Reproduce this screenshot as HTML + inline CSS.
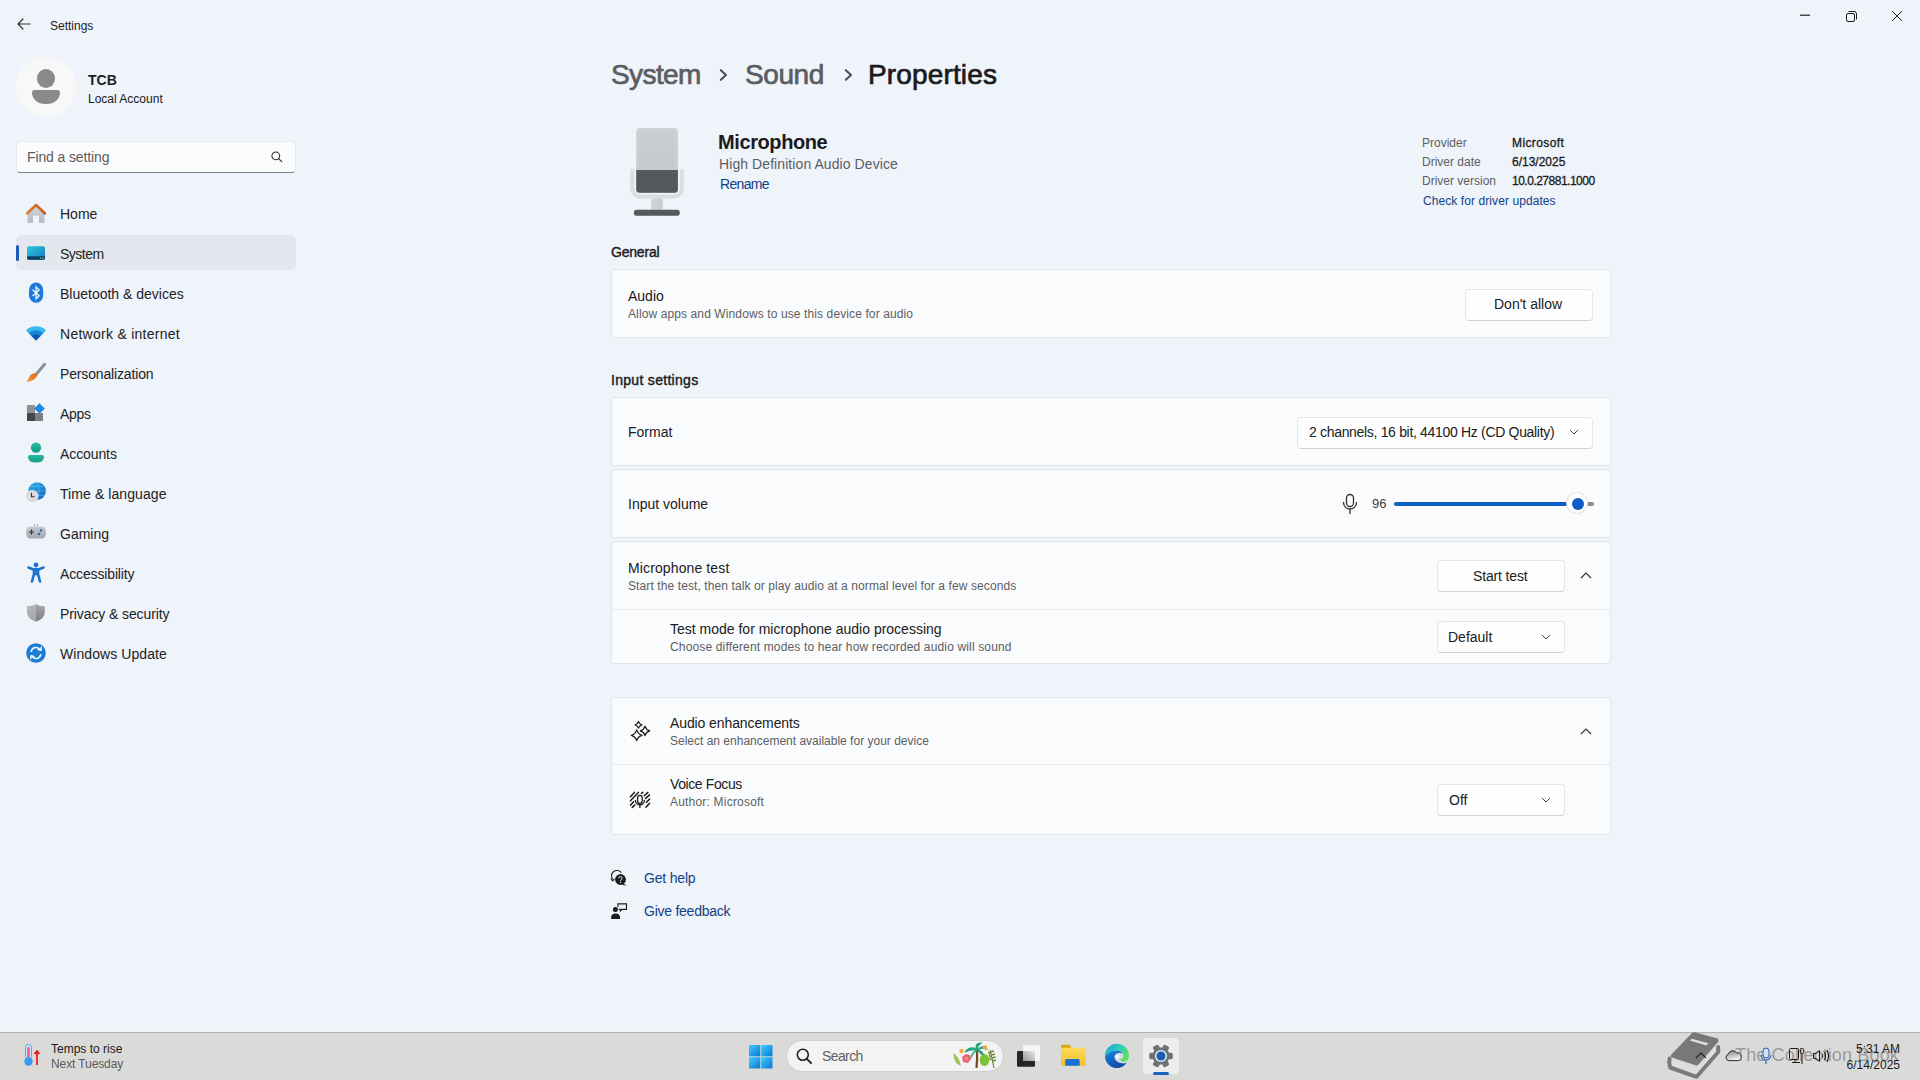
<!DOCTYPE html>
<html><head><meta charset="utf-8">
<style>
html,body{margin:0;padding:0;width:1920px;height:1080px;overflow:hidden;}
body{background:#eff3fa;font-family:"Liberation Sans",sans-serif;color:#202020;position:relative;}
.a{position:absolute;}
.t{position:absolute;white-space:nowrap;}
.f12{font-size:12px;line-height:12px;}
.f14{font-size:14px;line-height:14px;}
.f20{font-size:20px;line-height:20px;}
.f28{font-size:28px;line-height:28px;}
.sec{color:#5c5e62;}
.link{color:#0f4189;}
.card{position:absolute;left:611px;width:998px;background:#fafbfd;border:1px solid #e2e5ea;border-radius:3px;}
.btn{position:absolute;background:#fefefe;border:1px solid #e6e6e6;border-bottom-color:#d2d2d2;border-radius:4px;box-sizing:border-box;}
.sep{position:absolute;left:612px;width:998px;height:1px;background:#e6e8eb;}
.nav{position:absolute;left:60px;font-size:14px;line-height:14px;color:#222;white-space:nowrap;}
.ic{position:absolute;}
</style></head><body>

<!-- title bar -->
<svg class="ic" style="left:17px;top:18px" width="14" height="12" viewBox="0 0 14 12"><path d="M6 1 L1 6 L6 11 M1 6 H13" fill="none" stroke="#333" stroke-width="1.2" stroke-linecap="round" stroke-linejoin="round"/></svg>
<div class="t f12" style="left:50px;top:20px;color:#1f1f1f">Settings</div>

<svg class="ic" style="left:1795px;top:10px" width="20" height="12"><rect x="5" y="4.6" width="10" height="1.2" fill="#222"/></svg>
<svg class="ic" style="left:1840px;top:5px" width="22" height="22" viewBox="0 0 22 22"><rect x="6.5" y="8.5" width="8" height="8" rx="1.5" fill="none" stroke="#1b1b1b" stroke-width="1"/><path d="M8.5 6.5 H14 A2.5 2.5 0 0 1 16.5 9 V14.5" fill="none" stroke="#1b1b1b" stroke-width="1"/></svg>
<svg class="ic" style="left:1886px;top:5px" width="22" height="22" viewBox="0 0 22 22"><path d="M6 6 L16 16 M16 6 L6 16" stroke="#222" stroke-width="1" fill="none"/></svg>

<!-- profile -->
<div class="a" style="left:16px;top:57px;width:60px;height:60px;border-radius:50%;background:#f8f8f9"></div>
<div class="a" style="left:36.8px;top:69px;width:18px;height:18.5px;border-radius:50%;background:#8a8a8a"></div>
<div class="a" style="left:32px;top:90px;width:28px;height:13.8px;border-radius:3px 3px 14px 14px / 3px 3px 12px 12px;background:#8a8a8a"></div>
<div class="t f14" style="left:88px;top:73px;font-weight:bold">TCB</div>
<div class="t f12" style="left:88px;top:93px">Local Account</div>

<!-- search -->
<div class="a" style="left:16px;top:141px;width:278px;height:30px;background:#fbfcfd;border:1px solid #e6e8eb;border-bottom:1px solid #7d828a;border-radius:4px"></div>
<div class="t f14" style="left:27px;top:150px;color:#5d5d5d;letter-spacing:-0.12px">Find a setting</div>
<svg class="ic" style="left:270px;top:150px" width="14" height="14" viewBox="0 0 14 14"><circle cx="5.8" cy="5.8" r="3.9" fill="none" stroke="#333" stroke-width="1.05"/><path d="M8.6 8.6 L11.8 11.6" stroke="#333" stroke-width="1.2" stroke-linecap="round"/></svg>

<!-- NAV -->
<div class="a" style="left:16px;top:235px;width:280px;height:35px;background:#e4e8ee;border-radius:5px"></div>
<div class="a" style="left:16px;top:245px;width:3px;height:16px;background:#1a5bb5;border-radius:2px"></div>
<div class="nav" style="top:207px">Home</div>
<div class="nav" style="top:247px;letter-spacing:-0.5px">System</div>
<div class="nav" style="top:287px">Bluetooth &amp; devices</div>
<div class="nav" style="top:327px;letter-spacing:0.27px">Network &amp; internet</div>
<div class="nav" style="top:367px;letter-spacing:-0.15px">Personalization</div>
<div class="nav" style="top:407px;letter-spacing:-0.3px">Apps</div>
<div class="nav" style="top:447px;letter-spacing:-0.1px">Accounts</div>
<div class="nav" style="top:487px;letter-spacing:0.08px">Time &amp; language</div>
<div class="nav" style="top:527px">Gaming</div>
<div class="nav" style="top:567px;letter-spacing:-0.14px">Accessibility</div>
<div class="nav" style="top:607px;letter-spacing:-0.1px">Privacy &amp; security</div>
<div class="nav" style="top:647px;letter-spacing:0.07px">Windows Update</div>
<!-- home -->
<svg class="ic" style="left:26px;top:203px" width="20" height="20" viewBox="0 0 20 20">
 <defs><linearGradient id="hb" x1="0" y1="0" x2="0" y2="1"><stop offset="0" stop-color="#d6dade"/><stop offset="1" stop-color="#b3b8bf"/></linearGradient>
 <linearGradient id="hr" x1="0" y1="0" x2="1" y2="0"><stop offset="0" stop-color="#e57c28"/><stop offset="1" stop-color="#c9581c"/></linearGradient></defs>
 <path d="M1.5 10 L10 2.5 L18.5 10 V19.7 H13 V12.5 H7 V19.7 H1.5Z" fill="url(#hb)"/>
 <path d="M1 10.5 L10 2 L19 10.5" fill="none" stroke="url(#hr)" stroke-width="2.5" stroke-linejoin="round" stroke-linecap="round"/>
</svg>
<!-- system -->
<svg class="ic" style="left:26px;top:245px" width="20" height="16" viewBox="0 0 20 16">
 <defs><linearGradient id="sg" x1="0" y1="0" x2="1" y2="1"><stop offset="0" stop-color="#2ccbd8"/><stop offset="1" stop-color="#1a78c8"/></linearGradient></defs>
 <rect x="1" y="1.3" width="18" height="13.5" rx="1.8" fill="url(#sg)"/>
 <path d="M1 11.3 H19 V13 A1.8 1.8 0 0 1 17.2 14.8 H2.8 A1.8 1.8 0 0 1 1 13Z" fill="#0d3e5e"/>
 <rect x="14.2" y="12.5" width="1.2" height="1.2" fill="#8cc"/><rect x="16.2" y="12.5" width="1.2" height="1.2" fill="#8cc"/>
</svg>
<!-- bluetooth -->
<svg class="ic" style="left:26px;top:282px" width="20" height="22" viewBox="0 0 20 22">
 <rect x="3" y="0.6" width="14.2" height="20.2" rx="7" ry="7.6" fill="#1a7ade"/>
 <path d="M6.6 7.7 L13.2 13.8 L10.1 16.8 V4.9 L13.2 7.9 L6.6 14" fill="none" stroke="#fff" stroke-width="1.2" stroke-linejoin="miter"/>
</svg>
<!-- network -->
<svg class="ic" style="left:26px;top:324px" width="20" height="18" viewBox="0 0 20 18">
 <path d="M10 16.5 L-0.04 6.46 A14.2 14.2 0 0 1 20.04 6.46 Z" fill="#38b8ef"/>
 <path d="M10 16.5 L2.72 9.22 A10.3 10.3 0 0 1 17.28 9.22 Z" fill="#1a86d6"/>
 <path d="M10 16.5 L5.55 12.05 A6.3 6.3 0 0 1 14.45 12.05 Z" fill="#0d58b2"/>
</svg>
<!-- personalization -->
<svg class="ic" style="left:26px;top:363px" width="20" height="20" viewBox="0 0 20 20">
 <defs><linearGradient id="pb" x1="0" y1="1" x2="1" y2="0"><stop offset="0" stop-color="#f7a12b"/><stop offset="1" stop-color="#e0641a"/></linearGradient></defs>
 <path d="M18.6 1.2 L10 11.5" stroke="#8b9097" stroke-width="3" stroke-linecap="round"/>
 <path d="M9.2 10.4 Q6 9.6 4 12.8 Q2.5 15.8 0.5 19 Q5 18.4 8 16.5 Q11 14 11.2 12.3Z" fill="url(#pb)"/>
</svg>
<!-- apps -->
<svg class="ic" style="left:26px;top:402px" width="20" height="20" viewBox="0 0 20 20">
 <rect x="1" y="3" width="8" height="9" fill="#8e9196"/>
 <rect x="1" y="11" width="8" height="8" fill="#44464b"/>
 <rect x="9" y="11" width="8" height="8" fill="#7c7f84"/>
 <path d="M13.5 1.3 L18.8 6.5 L13.5 11.7 L8.2 6.5Z" fill="#1e88e0"/>
</svg>
<!-- accounts -->
<svg class="ic" style="left:26px;top:442px" width="20" height="22" viewBox="0 0 20 22">
 <defs><linearGradient id="ag" x1="0" y1="0" x2="0" y2="1"><stop offset="0" stop-color="#27bba0"/><stop offset="1" stop-color="#159c86"/></linearGradient></defs>
 <circle cx="10" cy="5.6" r="5.2" fill="url(#ag)"/>
 <path d="M2 15 A2 2 0 0 1 4 13 H16 A2 2 0 0 1 18 15 Q18 20.5 10 20.5 Q2 20.5 2 15Z" fill="url(#ag)"/>
</svg>
<!-- time -->
<svg class="ic" style="left:25px;top:481px" width="22" height="22" viewBox="0 0 22 22">
 <defs><linearGradient id="tg" x1="0" y1="0" x2="1" y2="1"><stop offset="0" stop-color="#2fb2e8"/><stop offset="1" stop-color="#0c63c0"/></linearGradient></defs>
 <circle cx="12.1" cy="10" r="8.8" fill="url(#tg)"/>
 <path d="M12.1 1.2 Q16 10 12.1 18.8 M3.5 10 H20.8 M5 5.5 H19 M5 14.5 H19" stroke="#7fd0f5" stroke-width="0.6" fill="none" opacity="0.7"/>
 <circle cx="7.2" cy="15.1" r="6.2" fill="#dcdcdc"/>
 <path d="M6.5 11.8 V15.8 H9.5" fill="none" stroke="#333" stroke-width="1.1"/>
</svg>
<!-- gaming -->
<svg class="ic" style="left:26px;top:524px" width="20" height="16" viewBox="0 0 20 16">
 <defs><linearGradient id="gg" x1="0" y1="0" x2="0" y2="1"><stop offset="0" stop-color="#c6cad0"/><stop offset="1" stop-color="#a4a9b0"/></linearGradient></defs>
 <path d="M4.5 2.5 H15.5 Q20 2.5 20 8.5 Q20 14.5 15.5 14.5 H4.5 Q0 14.5 0 8.5 Q0 2.5 4.5 2.5Z" fill="url(#gg)"/>
 <path d="M3 8 H8 M5.5 5.5 V10.5" stroke="#333" stroke-width="1.2"/>
 <circle cx="15" cy="6.5" r="1.3" fill="#1f6fb8"/><circle cx="13" cy="10" r="1.3" fill="#1f6fb8"/>
 <circle cx="8.5" cy="1" r="0.6" fill="#555"/><circle cx="11.5" cy="1" r="0.6" fill="#555"/>
</svg>
<!-- accessibility -->
<svg class="ic" style="left:26px;top:562px" width="20" height="22" viewBox="0 0 20 22">
 <circle cx="10" cy="3" r="2.4" fill="#1a73d0"/>
 <path d="M2.5 5.5 L7.5 7.5 H12.5 L17.5 5.5" stroke="#1a73d0" stroke-width="2.6" stroke-linecap="round" fill="none"/>
 <path d="M8 7.5 H12 V12 L14 19.5 M12 12 H8 M8 7.5 V12 L6 19.5" stroke="#1a73d0" stroke-width="2.6" stroke-linecap="round" stroke-linejoin="round" fill="#1a73d0"/>
</svg>
<!-- privacy -->
<svg class="ic" style="left:26px;top:603px" width="20" height="20" viewBox="0 0 20 20">
 <defs><linearGradient id="shg" x1="0" y1="0" x2="0" y2="1"><stop offset="0" stop-color="#a8a8aa"/><stop offset="1" stop-color="#7d7e82"/></linearGradient></defs>
 <path d="M10 1.2 Q14 3.5 18.8 3.2 V9.5 Q18.8 15.5 10 18.8 Q1.2 15.5 1.2 9.5 V3.2 Q6 3.5 10 1.2Z" fill="url(#shg)"/>
 <path d="M10 1.2 Q6 3.5 1.2 3.2 V9.5 Q1.2 15.5 10 18.8Z" fill="#c4c5c7" opacity="0.55"/>
</svg>
<!-- update -->
<svg class="ic" style="left:26px;top:643px" width="20" height="20" viewBox="0 0 20 20">
 <circle cx="10" cy="10" r="9.8" fill="#1a7ed6"/>
 <path d="M5.2 8.2 A5 5 0 0 1 14.2 6.8 M14.8 11.8 A5 5 0 0 1 5.8 13.2" fill="none" stroke="#fff" stroke-width="1.5" stroke-linecap="round"/>
 <path d="M12.3 6.6 L15 7.3 L15.3 4.3" fill="none" stroke="#fff" stroke-width="1.4" stroke-linecap="round" stroke-linejoin="round"/>
 <path d="M7.7 13.4 L5 12.7 L4.7 15.7" fill="none" stroke="#fff" stroke-width="1.4" stroke-linecap="round" stroke-linejoin="round"/>
</svg>


<!-- MAIN -->
<!-- breadcrumb -->
<div class="t f28" style="left:611px;top:61px;color:#5b5d61;-webkit-text-stroke:0.7px #5b5d61;letter-spacing:-0.6px">System</div>
<svg class="ic" style="left:716px;top:68px" width="14" height="14" viewBox="0 0 14 14"><path d="M4.8 2.2 L10 7 L4.8 11.8" fill="none" stroke="#4d5057" stroke-width="2.1" stroke-linecap="round" stroke-linejoin="round"/></svg>
<div class="t f28" style="left:745px;top:61px;color:#5b5d61;-webkit-text-stroke:0.7px #5b5d61;letter-spacing:-0.4px">Sound</div>
<svg class="ic" style="left:841px;top:68px" width="14" height="14" viewBox="0 0 14 14"><path d="M4.8 2.2 L10 7 L4.8 11.8" fill="none" stroke="#4d5057" stroke-width="2.1" stroke-linecap="round" stroke-linejoin="round"/></svg>
<div class="t f28" style="left:868px;top:61px;color:#1b1b1b;-webkit-text-stroke:0.7px #1b1b1b;letter-spacing:0.15px">Properties</div>

<!-- mic image -->
<svg class="ic" style="left:628px;top:126px" width="58" height="92" viewBox="0 0 58 92">
 <defs>
  <linearGradient id="mg" x1="0" y1="0" x2="0" y2="1"><stop offset="0" stop-color="#cdd1d6"/><stop offset="1" stop-color="#c3c8ce"/></linearGradient>
  <pattern id="dots" width="2" height="2" patternUnits="userSpaceOnUse"><rect width="1" height="1" fill="#a8aeb5" opacity="0.3"/></pattern>
  <linearGradient id="stg" x1="0" y1="0" x2="1" y2="0"><stop offset="0" stop-color="#d3d7db"/><stop offset="1" stop-color="#c6cacf"/></linearGradient>
 </defs>
 <path d="M4.2 44.5 V62.5 A8 8 0 0 0 12.2 70.5 H45.9 A8 8 0 0 0 53.9 62.5 V44.5" fill="none" stroke="#dadde1" stroke-width="4" stroke-linecap="round"/>
 <rect x="8.2" y="2.1" width="41.7" height="64.6" rx="3.5" fill="url(#mg)"/>
 <rect x="12" y="5" width="34" height="37" fill="url(#dots)"/>
 <path d="M8.2 44 H49.9 V63.2 A3.5 3.5 0 0 1 46.4 66.7 H11.7 A3.5 3.5 0 0 1 8.2 63.2 Z" fill="#55585c"/>
 <rect x="23" y="72.5" width="11.6" height="11.2" fill="url(#stg)"/>
 <rect x="5.9" y="83.8" width="45.8" height="6" rx="2.5" fill="#55585c"/>
</svg>

<div class="t f20" style="left:718px;top:132px;font-weight:bold;letter-spacing:-0.4px;color:#1b1b1b">Microphone</div>
<div class="t f14 sec" style="left:719px;top:157px;letter-spacing:0.08px">High Definition Audio Device</div>
<div class="t f14 link" style="left:720px;top:177px;letter-spacing:-0.67px">Rename</div>

<!-- driver info -->
<div class="t f12 sec" style="left:1422px;top:137px">Provider</div>
<div class="t f12 sec" style="left:1422px;top:156px">Driver date</div>
<div class="t f12 sec" style="left:1422px;top:175px">Driver version</div>
<div class="t f12" style="left:1512px;top:137px;-webkit-text-stroke:0.3px #1b1b1b;letter-spacing:0.4px">Microsoft</div>
<div class="t f12" style="left:1512px;top:156px;-webkit-text-stroke:0.3px #1b1b1b">6/13/2025</div>
<div class="t f12" style="left:1512px;top:175px;-webkit-text-stroke:0.3px #1b1b1b;letter-spacing:-0.5px">10.0.27881.1000</div>
<div class="t f12 link" style="left:1423px;top:195px;letter-spacing:0.08px">Check for driver updates</div>

<!-- General -->
<div class="t f14" style="left:611px;top:245px;-webkit-text-stroke:0.4px #1b1b1b;letter-spacing:-0.2px">General</div>
<div class="card" style="top:269px;height:67px"></div>
<div class="t f14" style="left:628px;top:289px">Audio</div>
<div class="t f12 sec" style="left:628px;top:308px;letter-spacing:0.11px">Allow apps and Windows to use this device for audio</div>
<div class="btn" style="left:1465px;top:289px;width:128px;height:32px"></div>
<div class="t f14" style="left:1494px;top:297px">Don't allow</div>

<!-- Input settings -->
<div class="t f14" style="left:611px;top:373px;-webkit-text-stroke:0.4px #1b1b1b;letter-spacing:0.3px">Input settings</div>
<div class="card" style="top:397px;height:67px"></div>
<div class="t f14" style="left:628px;top:425px">Format</div>
<div class="btn" style="left:1297px;top:417px;width:296px;height:32px"></div>
<div class="t f14" style="left:1309px;top:425px;letter-spacing:-0.32px">2 channels, 16 bit, 44100 Hz (CD Quality)</div>
<svg class="ic" style="left:1568px;top:427px" width="12" height="10" viewBox="0 0 12 10"><path d="M2 3 L6 7 L10 3" fill="none" stroke="#444" stroke-width="1"/></svg>

<div class="card" style="top:469px;height:67px"></div>
<div class="t f14" style="left:628px;top:497px">Input volume</div>
<svg class="ic" style="left:1340px;top:493px" width="20" height="22" viewBox="0 0 20 22"><rect x="6.5" y="1.5" width="7" height="12" rx="3.5" fill="none" stroke="#333" stroke-width="1.3"/><path d="M3.5 9.5 A6.5 6.5 0 0 0 16.5 9.5 M10 16 V20.5" fill="none" stroke="#333" stroke-width="1.3" stroke-linecap="round"/></svg>
<div class="t f12" style="left:1372px;top:498px;font-size:13px;color:#3e3e3e">96</div>
<div class="a" style="left:1394px;top:502px;width:176px;height:4px;background:#0a5ec4;border-radius:2px"></div>
<div class="a" style="left:1586px;top:502px;width:8px;height:4px;background:#8b8b8b;border-radius:2px"></div>
<div class="a" style="left:1567px;top:493px;width:20px;height:20px;border-radius:50%;background:#fff;box-shadow:0 0 0 1px #e3e3e3"></div>
<div class="a" style="left:1572px;top:498px;width:12px;height:12px;border-radius:50%;background:#0a5ec4"></div>

<!-- Microphone test -->
<div class="card" style="top:541px;height:121px"></div>
<div class="t f14" style="left:628px;top:561px;letter-spacing:0.12px">Microphone test</div>
<div class="t f12 sec" style="left:628px;top:580px;letter-spacing:0.1px">Start the test, then talk or play audio at a normal level for a few seconds</div>
<div class="btn" style="left:1437px;top:560px;width:128px;height:32px"></div>
<div class="t f14" style="left:1473px;top:569px;letter-spacing:-0.15px">Start test</div>
<svg class="ic" style="left:1578px;top:569px" width="16" height="12" viewBox="0 0 16 12"><path d="M3 9 L8 4 L13 9" fill="none" stroke="#333" stroke-width="1.2"/></svg>
<div class="sep" style="top:609px"></div>
<div class="t f14" style="left:670px;top:622px">Test mode for microphone audio processing</div>
<div class="t f12 sec" style="left:670px;top:641px;letter-spacing:0.15px">Choose different modes to hear how recorded audio will sound</div>
<div class="btn" style="left:1437px;top:621px;width:128px;height:32px"></div>
<div class="t f14" style="left:1448px;top:630px">Default</div>
<svg class="ic" style="left:1540px;top:632px" width="12" height="10" viewBox="0 0 12 10"><path d="M2 3 L6 7 L10 3" fill="none" stroke="#444" stroke-width="1"/></svg>

<!-- Audio enhancements -->
<div class="card" style="top:697px;height:136px"></div>
<svg class="ic" style="left:628px;top:719px" width="24" height="24" viewBox="0 0 24 24"><path d="M10.5 2.4 Q11.248 5.052 13.9 5.8 Q11.248 6.548 10.5 9.2 Q9.752 6.548 7.1 5.8 Q9.752 5.052 10.5 2.4Z" fill="none" stroke="#1b1b1b" stroke-width="1.25" stroke-linejoin="round"/><path d="M17 7.2 Q18.034 10.866 21.7 11.9 Q18.034 12.934000000000001 17 16.6 Q15.966 12.934000000000001 12.3 11.9 Q15.966 10.866 17 7.2Z" fill="none" stroke="#1b1b1b" stroke-width="1.25" stroke-linejoin="round"/><path d="M8.7 10.9 Q9.888 15.112 14.1 16.3 Q9.888 17.488 8.7 21.700000000000003 Q7.511999999999999 17.488 3.299999999999999 16.3 Q7.511999999999999 15.112 8.7 10.9Z" fill="none" stroke="#1b1b1b" stroke-width="1.25" stroke-linejoin="round"/></svg>
<div class="t f14" style="left:670px;top:716px;letter-spacing:-0.1px">Audio enhancements</div>
<div class="t f12 sec" style="left:670px;top:735px">Select an enhancement available for your device</div>
<svg class="ic" style="left:1578px;top:725px" width="16" height="12" viewBox="0 0 16 12"><path d="M3 9 L8 4 L13 9" fill="none" stroke="#333" stroke-width="1.2"/></svg>
<div class="sep" style="top:764px"></div>
<svg class="ic" style="left:628px;top:790px" width="24" height="20" viewBox="0 0 24 20">
 <g fill="none" stroke="#1b1b1b" stroke-width="1.5" stroke-linecap="round">
  <path d="M2.4 6.8 L6.4 2.4 M2.4 10.8 L10.4 2.4 M2.4 15.3 L5.6 11.7 M4.2 17.4 L6.8 15.1 M13.4 3.3 L14.9 2.4 M16.3 5.7 L19.9 2.4 M17.7 8.4 L21.5 4.9 M18.4 12.3 L21.6 9.1 M17.9 17.3 L21.6 13.3"/>
  <path d="M7.4 10.3 A4.5 4.5 0 0 0 16.4 10.3 M11.9 14.8 V17.4" stroke-width="1.3"/>
 </g>
 <rect x="9.6" y="5.4" width="4.6" height="7.9" rx="2.3" fill="none" stroke="#1b1b1b" stroke-width="1.3"/>
</svg>
<div class="t f14" style="left:670px;top:777px;letter-spacing:-0.4px">Voice Focus</div>
<div class="t f12 sec" style="left:670px;top:796px;letter-spacing:0.2px">Author: Microsoft</div>
<div class="btn" style="left:1437px;top:784px;width:128px;height:32px"></div>
<div class="t f14" style="left:1449px;top:793px">Off</div>
<svg class="ic" style="left:1540px;top:795px" width="12" height="10" viewBox="0 0 12 10"><path d="M2 3 L6 7 L10 3" fill="none" stroke="#444" stroke-width="1"/></svg>

<!-- help links -->
<svg class="ic" style="left:610px;top:869px" width="18" height="18" viewBox="0 0 18 18">
 <path d="M2.6 10.2 A5 5 0 0 1 11.3 3.6" fill="none" stroke="#1b1b1b" stroke-width="1.1"/>
 <path d="M0.9 9.6 L2.7 11.8 L4.4 9.9" fill="none" stroke="#1b1b1b" stroke-width="1.1" stroke-linejoin="round"/>
 <circle cx="10.5" cy="10.5" r="5.4" fill="#1b1b1b"/>
 <path d="M13.2 14.2 L16.8 16.8 L12.2 15.8Z" fill="#1b1b1b"/>
 <path d="M8.9 9.2 A1.6 1.6 0 1 1 11.2 10.6 Q10.5 11 10.5 12" fill="none" stroke="#fff" stroke-width="1"/>
 <circle cx="10.5" cy="13.4" r="0.6" fill="#fff"/>
</svg>
<div class="t f14 link" style="left:644px;top:871px;letter-spacing:-0.19px">Get help</div>
<svg class="ic" style="left:610px;top:902px" width="18" height="18" viewBox="0 0 18 18">
 <circle cx="5.4" cy="7.4" r="2.5" fill="#1b1b1b"/>
 <path d="M1.2 16.9 V15.3 A4.4 3.8 0 0 1 10 15.3 V16.9Z" fill="#1b1b1b"/>
 <path d="M7.9 5.2 V1.9 H16.5 V7.4 H12 L10.4 9 V7.4 H8.8" fill="none" stroke="#1b1b1b" stroke-width="1.1"/>
</svg>
<div class="t f14 link" style="left:644px;top:904px;letter-spacing:-0.25px">Give feedback</div>


<!-- TASKBAR -->
<div class="a" style="left:0;top:1031px;width:1920px;height:1px;background:#f4f5f9"></div>
<div class="a" style="left:0;top:1032px;width:1920px;height:48px;background:#dadad9;border-top:1px solid #b1b2b4;box-sizing:border-box"></div>
<!-- weather -->
<svg class="ic" style="left:20px;top:1043px" width="22" height="24" viewBox="0 0 22 24">
 <rect x="5.5" y="1.5" width="6" height="15" rx="3" fill="#cfe6fb" stroke="#4fa3ee" stroke-width="1"/>
 <rect x="7.3" y="4" width="2.4" height="12" rx="1.2" fill="#e0578a"/>
 <circle cx="8.5" cy="18.5" r="4.2" fill="#3b9aee"/>
 <path d="M17 22 V8.5 M14.5 11 L17 8 L19.5 11" stroke="#e81f1f" stroke-width="1.8" fill="none" stroke-linejoin="round"/>
</svg>
<div class="t f12" style="left:51px;top:1043px;color:#1b1b1b">Temps to rise</div>
<div class="t f12" style="left:51px;top:1058px;color:#5a5a5a;letter-spacing:-0.1px">Next Tuesday</div>
<!-- start -->
<svg class="ic" style="left:749px;top:1045px" width="24" height="24" viewBox="0 0 24 24">
 <defs><linearGradient id="wl" x1="0" y1="0" x2="1" y2="1"><stop offset="0" stop-color="#3ccdfd"/><stop offset="1" stop-color="#0b78d6"/></linearGradient></defs>
 <rect x="0" y="0" width="11.3" height="11.3" fill="url(#wl)"/><rect x="12.2" y="0" width="11.3" height="11.3" fill="url(#wl)"/>
 <rect x="0" y="12.2" width="11.3" height="11.3" fill="url(#wl)"/><rect x="12.2" y="12.2" width="11.3" height="11.3" fill="url(#wl)"/>
</svg>
<!-- search pill -->
<div class="a" style="left:786px;top:1040px;width:218px;height:32px;border-radius:16px;background:#f3f3f3;border:1px solid #cfcfcf;box-sizing:border-box"></div>
<svg class="ic" style="left:795px;top:1047px" width="18" height="18" viewBox="0 0 18 18"><circle cx="7.8" cy="7.8" r="5.5" fill="none" stroke="#222" stroke-width="1.6"/><path d="M11.8 11.8 L16 16" stroke="#222" stroke-width="1.8" stroke-linecap="round"/></svg>
<div class="t f14" style="left:822px;top:1049px;color:#5f5f5f;letter-spacing:-0.6px">Search</div>
<svg class="ic" style="left:950px;top:1042px" width="50" height="28" viewBox="0 0 50 28">
 <path d="M3 11 Q9 14 11 24 Q4 22 3 11Z" fill="#9cc45a"/>
 <circle cx="11.5" cy="9" r="2.2" fill="#f2a94a"/>
 <path d="M16 12 L20 13 L21 17 L18 21 L13 20 L12 15Z" fill="#ef5f86"/>
 <circle cx="16.5" cy="16.5" r="1.8" fill="#e8a43a"/>
 <path d="M26.5 26 Q27.5 16 27 8" stroke="#7a4a1c" stroke-width="2.2" fill="none"/>
 <path d="M27 8 Q21 3 15 10 Q21 7 27 8 Q24 1 31 1 Q27 4 27 8 Q33 2 37 7 Q31 5 27 8 Q33 8 34 15 Q30 10 27 8 Q22 10 21 16 Q23 10 27 8Z" fill="#23a27e" stroke="#23a27e" stroke-width="1.2"/>
 <circle cx="35" cy="5.5" r="2.2" fill="#f2a94a"/>
 <ellipse cx="34.5" cy="18" rx="4.8" ry="6" fill="#7cc233"/>
 <path d="M44 26 Q42 16 40 8" stroke="#6a8a3a" stroke-width="1.2" fill="none"/>
 <path d="M41 10 L44 9 M41.5 13 L45 12 M42 16 L45.5 15 M42.5 19 L46 18 M40 12 L38.5 10 M40.5 15 L39 13 M41 18 L39.5 16" stroke="#6a8a3a" stroke-width="1.4"/>
</svg>
<!-- task view -->
<svg class="ic" style="left:1016px;top:1044px" width="26" height="24" viewBox="0 0 26 24">
 <defs><linearGradient id="tvg" x1="1" y1="0" x2="0" y2="1"><stop offset="0" stop-color="#e6e6e6"/><stop offset="1" stop-color="#9a9a9a"/></linearGradient></defs>
 <rect x="7" y="1.3" width="17" height="15.5" rx="1" fill="#f7f7f7"/>
 <rect x="1" y="7" width="18" height="15.7" rx="1.3" fill="#252525"/>
 <rect x="7" y="7" width="12" height="10" fill="url(#tvg)"/>
</svg>
<!-- explorer -->
<svg class="ic" style="left:1060px;top:1044px" width="26" height="24" viewBox="0 0 26 24">
 <defs><linearGradient id="fg" x1="0" y1="0" x2="0" y2="1"><stop offset="0" stop-color="#ffd95a"/><stop offset="1" stop-color="#f6c12a"/></linearGradient></defs>
 <path d="M1 2.5 A1.8 1.8 0 0 1 2.8 0.8 H8.5 Q10.5 0.8 11 3 V5 H1Z" fill="#dca612"/>
 <rect x="1" y="3.8" width="24.5" height="18" rx="1.5" fill="url(#fg)"/>
 <path d="M5.2 21.8 V16.5 A1.5 1.5 0 0 1 6.7 15 H18.2 A1.5 1.5 0 0 1 19.7 16.5 V21.8Z" fill="#1a73d4"/>
</svg>
<!-- edge -->
<svg class="ic" style="left:1104px;top:1043px" width="26" height="26" viewBox="0 0 26 26">
 <defs>
  <linearGradient id="eg1" x1="0" y1="0" x2="1" y2="0.6"><stop offset="0" stop-color="#1a9ae0"/><stop offset="0.55" stop-color="#2ccfbc"/><stop offset="1" stop-color="#5be065"/></linearGradient>
  <linearGradient id="eg2" x1="0" y1="0" x2="0.6" y2="1"><stop offset="0" stop-color="#1a86dc"/><stop offset="1" stop-color="#0c4aa6"/></linearGradient>
 </defs>
 <path d="M1 13.5 A12 12 0 0 1 25 12 Q25.3 17 21 18.5 Q17 19.5 16 16 Q20 15.5 19.5 12 Q18.5 7.5 13 7.5 Q5.5 7.5 1 13.5Z" fill="url(#eg1)"/>
 <path d="M1 13.5 Q5.5 7.5 13 7.5 Q17.5 7.8 18.8 11 Q15 8.5 11.5 11.5 Q9.5 14 11.5 17 Q14 20 19.5 20.5 Q22 20.3 23 19.2 Q19 25 13 25 A12 12 0 0 1 1 13.5Z" fill="url(#eg2)"/>
 <circle cx="13.2" cy="13.6" r="2.3" fill="#e9f4fb"/>
</svg>
<!-- settings -->
<div class="a" style="left:1142px;top:1037px;width:38px;height:38px;border-radius:5px;background:#ededed;border:1px solid #d9d9d9;box-sizing:border-box"></div>
<svg class="ic" style="left:1148px;top:1043px" width="26" height="26" viewBox="0 0 26 26">
 <g fill="#6f7378" transform="rotate(30 13 13)">
  <circle cx="13" cy="13" r="8.6"/>
  <rect x="9.8" y="1.2" width="6.4" height="5" rx="1.6"/>
  <rect x="9.8" y="1.2" width="6.4" height="5" rx="1.6" transform="rotate(60 13 13)"/>
  <rect x="9.8" y="1.2" width="6.4" height="5" rx="1.6" transform="rotate(120 13 13)"/>
  <rect x="9.8" y="1.2" width="6.4" height="5" rx="1.6" transform="rotate(180 13 13)"/>
  <rect x="9.8" y="1.2" width="6.4" height="5" rx="1.6" transform="rotate(240 13 13)"/>
  <rect x="9.8" y="1.2" width="6.4" height="5" rx="1.6" transform="rotate(300 13 13)"/>
 </g>
 <circle cx="13" cy="13" r="6" fill="#dcecfa"/>
 <circle cx="13" cy="13" r="4.5" fill="#1a5db4"/>
</svg>
<div class="a" style="left:1153px;top:1072px;width:16px;height:3px;border-radius:2px;background:#1a62c4"></div>
<!-- tray: watermark book -->
<svg class="ic" style="left:1665px;top:1030px" width="60" height="50" viewBox="0 0 60 50">
 <path d="M4.6 28.5 Q3.5 33 5.2 37.5 L31.5 46.8 L53.2 22 V17" fill="none" stroke="#7a7a7a" stroke-width="4" stroke-linejoin="round" stroke-linecap="round"/>
 <path d="M7.5 30 L31.5 38.5 L50 17.5 L50.5 22 L31 44 L7 35.5Z" fill="#dedede"/>
 <path d="M27 3 Q28.5 1.8 30.5 2.5 L51.8 8.2 Q54.5 9.2 53 12 L33.5 34.5 Q32.3 35.8 30.5 35.2 L7 27.5 Q4.8 26.7 6.2 24.8Z" fill="#787878"/>
 <path d="M24.8 10.6 L26.8 8.8 L43.3 13.3 L41.5 15.5Z" fill="#dedede"/>
</svg>
<svg class="ic" style="left:1694px;top:1050px" width="14" height="10" viewBox="0 0 14 10"><path d="M2 8 L7 3 L12 8" fill="none" stroke="#222" stroke-width="1.1"/></svg>
<div class="t" style="left:1735px;top:1046px;font-size:18px;line-height:18px;color:rgba(125,125,125,0.7);letter-spacing:0.15px">The Collection Book</div>
<svg class="ic" style="left:1724.5px;top:1049px" width="17" height="13" viewBox="0 0 19 14" preserveAspectRatio="none">
 <defs><linearGradient id="cg" x1="0" y1="0" x2="0.3" y2="1"><stop offset="0" stop-color="#7d7d7d"/><stop offset="1" stop-color="#f4f4f4"/></linearGradient></defs>
 <path d="M4.5 12.5 A3.5 3.5 0 0 1 3.8 5.6 A5 5 0 0 1 13 4.3 A3.8 3.8 0 0 1 14.8 12.5Z" fill="url(#cg)" stroke="#1b1b1b" stroke-width="1"/></svg>
<svg class="ic" style="left:1759px;top:1047px" width="14" height="18" viewBox="0 0 14 18"><rect x="4" y="1" width="6" height="10" rx="3" fill="#cfe0f7" stroke="#2a5fb0" stroke-width="1"/><path d="M2 8 A5 5 0 0 0 12 8 M7 13 V17" fill="none" stroke="#2a5fb0" stroke-width="1.1"/></svg>
<svg class="ic" style="left:1788px;top:1047px" width="18" height="18" viewBox="0 0 18 18"><rect x="1.5" y="1.5" width="9" height="11" rx="1" fill="none" stroke="#1b1b1b" stroke-width="1"/><path d="M4 15.5 H12 M7 12.5 V15.5 M14 6.5 V17" stroke="#1b1b1b" stroke-width="1"/><rect x="12.3" y="1.5" width="3.4" height="5" rx="1.2" fill="none" stroke="#1b1b1b" stroke-width="1"/></svg>
<svg class="ic" style="left:1811px;top:1048px" width="20" height="16" viewBox="0 0 20 16"><path d="M2.5 5.5 H5 L8.5 2.5 V13.5 L5 10.5 H2.5Z" fill="none" stroke="#1b1b1b" stroke-width="1"/><path d="M11 6 Q12 8 11 10 M13.5 4 Q15.5 8 13.5 12 M16 2 Q19 8 16 14" fill="none" stroke="#1b1b1b" stroke-width="1.1"/></svg>
<div class="t f12" style="right:20px;top:1043px;color:#1b1b1b;text-align:right">5:31 AM</div>
<div class="t f12" style="right:20px;top:1059px;color:#1b1b1b;text-align:right">6/14/2025</div>
</body></html>
